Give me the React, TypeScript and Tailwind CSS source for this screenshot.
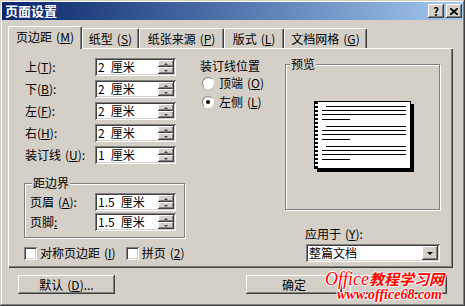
import React from "react";

const raised =
  "shadow-[inset_-1px_-1px_#404040,inset_1px_1px_#ffffff,inset_-2px_-2px_#808080,inset_2px_2px_#d4d0c8]";
const sunken =
  "shadow-[inset_1px_1px_#808080,inset_-1px_-1px_#ffffff,inset_2px_2px_#404040,inset_-2px_-2px_#d4d0c8]";

const Key: React.FC<{ k: string; gap?: boolean }> = ({ k, gap = true }) => (
  <span className={gap ? "ml-[4px]" : ""}>
    (<u>{k}</u>)
  </span>
);

const SpinInput: React.FC<{ num: string; unit: string }> = ({ num, unit }) => (
  <div className={`flex h-[18px] w-[81px] items-stretch bg-white p-[2px] ${sunken}`}>
    <div className="flex flex-1 gap-[6px] pl-[1px] text-[12px] leading-[14px] text-black">
      <span>{num}</span>
      <span>{unit}</span>
    </div>
    <div className="flex w-[16px] flex-col">
      <div className={`flex flex-1 items-center justify-center bg-[#d4d0c8] ${raised}`}>
        <div className="h-0 w-0 border-x-[2px] border-b-[2px] border-x-transparent border-b-[#404040]" />
      </div>
      <div className={`flex flex-1 items-center justify-center bg-[#d4d0c8] ${raised}`}>
        <div className="h-0 w-0 border-x-[2px] border-t-[2px] border-x-transparent border-t-[#404040]" />
      </div>
    </div>
  </div>
);

const FieldRow: React.FC<{ label: React.ReactNode; num: string; labelW: string }> = ({
  label,
  num,
  labelW,
}) => (
  <div className="flex items-center">
    <div className={`${labelW} text-[12px] leading-[14px]`}>{label}</div>
    <SpinInput num={num} unit="厘米" />
  </div>
);

const Check: React.FC<{ label: React.ReactNode }> = ({ label }) => (
  <div className="flex items-center">
    <div className={`h-[13px] w-[13px] bg-white ${sunken}`} />
    <span className="ml-[3px] text-[12px] leading-[14px]">{label}</span>
  </div>
);

const Radio: React.FC<{ label: React.ReactNode; checked?: boolean }> = ({ label, checked }) => (
  <div className="flex h-[14px] items-center">
    <div className="relative flex h-[12px] w-[12px] items-center justify-center rounded-full border border-t-[#808080] border-l-[#808080] border-r-white border-b-white bg-white">
      {checked && <div className="h-[4px] w-[4px] rounded-full bg-black" />}
    </div>
    <span className="ml-[5px] text-[12px] leading-[14px]">{label}</span>
  </div>
);

const Button: React.FC<{ children?: React.ReactNode; w: string }> = ({ children, w }) => (
  <div className={`flex h-[19px] ${w} items-center justify-center bg-[#d4d0c8] text-[12px] leading-[14px] ${raised}`}>
    {children}
  </div>
);

const tabs = [
  { label: "纸型", k: "S", w: "w-[57px]" },
  { label: "纸张来源", k: "P", w: "w-[85px]" },
  { label: "版式", k: "L", w: "w-[60px]" },
  { label: "文档网格", k: "G", w: "w-[83px]" },
];

const PagePreview = () => (
  <svg width="100" height="71" viewBox="0 0 100 71">
    <rect x="3" y="3" width="97" height="68" fill="#000" />
    <rect x="0.5" y="0.5" width="96" height="67" fill="#fff" stroke="#000" />
    <line x1="2.5" y1="1" x2="2.5" y2="67" stroke="#000" strokeWidth="3" strokeDasharray="2 2" />
    {[0, 20, 40].map((o) => (
      <g key={o} stroke="#000" strokeWidth="1">
        <line x1="12" y1={5.5 + o} x2="92" y2={5.5 + o} />
        <line x1="8" y1={9.5 + o} x2="92" y2={9.5 + o} />
        <line x1="8" y1={13.5 + o} x2="92" y2={13.5 + o} />
        <line x1="8" y1={18.5 + o} x2="36" y2={18.5 + o} />
      </g>
    ))}
  </svg>
);

export default function App() {
  return (
    <div className="relative h-[306px] w-[465px] overflow-hidden bg-[#d4d0c8] p-[2px] font-['Noto_Sans_CJK_SC','Liberation_Sans',sans-serif] text-black shadow-[inset_-1px_-1px_#404040,inset_1px_1px_#d4d0c8,inset_-2px_-2px_#808080,inset_2px_2px_#ffffff]">
      {/* title bar */}
      <div className="flex h-[18px] items-center justify-between bg-gradient-to-r from-[#0a246a] to-[#a6caf0] pl-[3px] pr-[1px]">
        <span className="text-[13px] font-bold leading-[16px] text-white">页面设置</span>
        <div className="flex gap-[2px]">
          <div className={`flex h-[14px] w-[16px] items-center justify-center bg-[#d4d0c8] text-[11px] font-bold leading-[12px] ${raised}`}>
            ?
          </div>
          <div className={`flex h-[14px] w-[16px] items-center justify-center bg-[#d4d0c8] ${raised}`}>
            <svg width="8" height="7" viewBox="0 0 8 7">
              <path d="M0 0 L8 7 M8 0 L0 7" stroke="#000" strokeWidth="1.8" />
            </svg>
          </div>
        </div>
      </div>

      <div className="px-[6px] pt-[6px]">
        {/* tabs */}
        <div className="flex h-[22px] items-end">
          <div className="relative z-10 -mb-px flex h-[23px] w-[74px] items-center justify-center rounded-t-[2px] border-l border-t border-r border-l-white border-t-white border-r-[#404040] bg-[#d4d0c8] pb-[2px] text-[12px] leading-[14px] shadow-[inset_-1px_0_#808080]">
            页边距<Key k="M" />
          </div>
          {tabs.map((t) => (
            <div
              key={t.label}
              className={`flex h-[20px] ${t.w} items-center justify-center rounded-t-[2px] border-l border-t border-r border-l-white border-t-white border-r-[#404040] text-[12px] leading-[14px] shadow-[inset_-1px_0_#808080]`}
            >
              {t.label}
              <Key k={t.k} />
            </div>
          ))}
        </div>

        {/* panel */}
        <div className="flex h-[220px] w-[445px] pl-[16px] pt-[10px] shadow-[inset_1px_1px_#ffffff,inset_-1px_-1px_#404040,inset_-2px_-2px_#808080]">
          {/* left column */}
          <div className="flex w-[161px] flex-col">
            <div className="flex flex-col gap-[4px]">
              <FieldRow labelW="w-[71px] pl-[1px]" label={<>上<Key k="T" gap={false} />:</>} num="2" />
              <FieldRow labelW="w-[71px] pl-[1px]" label={<>下<Key k="B" gap={false} />:</>} num="2" />
              <FieldRow labelW="w-[71px] pl-[1px]" label={<>左<Key k="F" gap={false} />:</>} num="2" />
              <FieldRow labelW="w-[71px] pl-[1px]" label={<>右<Key k="H" gap={false} />:</>} num="2" />
              <FieldRow labelW="w-[71px] pl-[1px]" label={<>装订线<Key k="U" />:</>} num="1" />
            </div>
            <fieldset className="mt-[13px] w-[161px] border border-[#808080] pb-[6px] pl-[5px] pt-[4px] shadow-[1px_1px_0_#ffffff,inset_1px_1px_0_#ffffff]">
              <legend className="ml-[2px] bg-[#d4d0c8] px-[1px] text-[12px] leading-[12px]">距边界</legend>
              <div className="flex flex-col gap-[2px]">
                <FieldRow labelW="w-[65px]" label={<>页眉<Key k="A" />:</>} num="1.5" />
                <FieldRow labelW="w-[65px]" label={<>页脚<u>:</u></>} num="1.5" />
              </div>
            </fieldset>
            <div className="mt-[8px] flex gap-[10px]">
              <Check label={<>对称页边距<Key k="I" /></>} />
              <Check label={<>拼页<Key k="2" /></>} />
            </div>
          </div>

          {/* middle column */}
          <div className="ml-[15px] flex w-[85px] flex-col pt-[1px]">
            <div className="text-[12px] leading-[14px]">装订线位置</div>
            <div className="ml-[2px] mt-[3px] flex flex-col gap-[5px]">
              <Radio label={<>顶端<Key k="O" /></>} />
              <Radio checked label={<>左侧<Key k="L" /></>} />
            </div>
          </div>

          {/* right column */}
          <div className="flex w-[155px] flex-col">
            <fieldset className="h-[152px] w-[155px] border border-[#808080] shadow-[1px_1px_0_#ffffff,inset_1px_1px_0_#ffffff]">
              <legend className="ml-[4px] bg-[#d4d0c8] px-[1px] text-[12px] leading-[12px]">预览</legend>
              <div className="flex h-[134px] items-center justify-center pb-[2px] pl-[2px]">
                <PagePreview />
              </div>
            </fieldset>
            <div className="ml-[20px] mt-[17px] text-[12px] leading-[14px]">
              应用于<Key k="Y" />:
            </div>
            <div className={`ml-[21px] mt-[3px] flex h-[18px] w-[134px] items-stretch bg-white p-[2px] ${sunken}`}>
              <div className="flex-1 pl-[1px] text-[12px] leading-[14px]">整篇文档</div>
              <div className={`flex w-[16px] items-center justify-center bg-[#d4d0c8] ${raised}`}>
                <div className="h-0 w-0 border-x-[3px] border-t-[3px] border-x-transparent border-t-black" />
              </div>
            </div>
          </div>
        </div>

        {/* buttons */}
        <div className="mt-[7px] flex">
          <div className="ml-[10px]">
            <Button w="w-[97px]">
              默认<Key k="D" />...
            </Button>
          </div>
          <div className="ml-[131px]">
            <Button w="w-[96px]">确定</Button>
          </div>
          <div className="ml-[8px]">
            <Button w="w-[97px]" />
          </div>
        </div>
      </div>

      {/* watermark */}
      <div className="absolute left-[325px] top-[270px] flex flex-col text-[#ff0000] [text-shadow:1px_0_#fff,-1px_0_#fff,0_1px_#fff,0_-1px_#fff]">
        <div className="flex h-[16px] items-end overflow-visible">
          <span className="font-['Liberation_Serif',serif] text-[18px] italic leading-[14px]">Office</span>
          <span className="text-[15px] font-bold italic leading-[14px]">教程学习网</span>
        </div>
        <span className="ml-[12px] mt-[3px] font-['Liberation_Serif',serif] text-[14px] font-bold italic leading-[11px]">
          www.office68.com
        </span>
      </div>
    </div>
  );
}
